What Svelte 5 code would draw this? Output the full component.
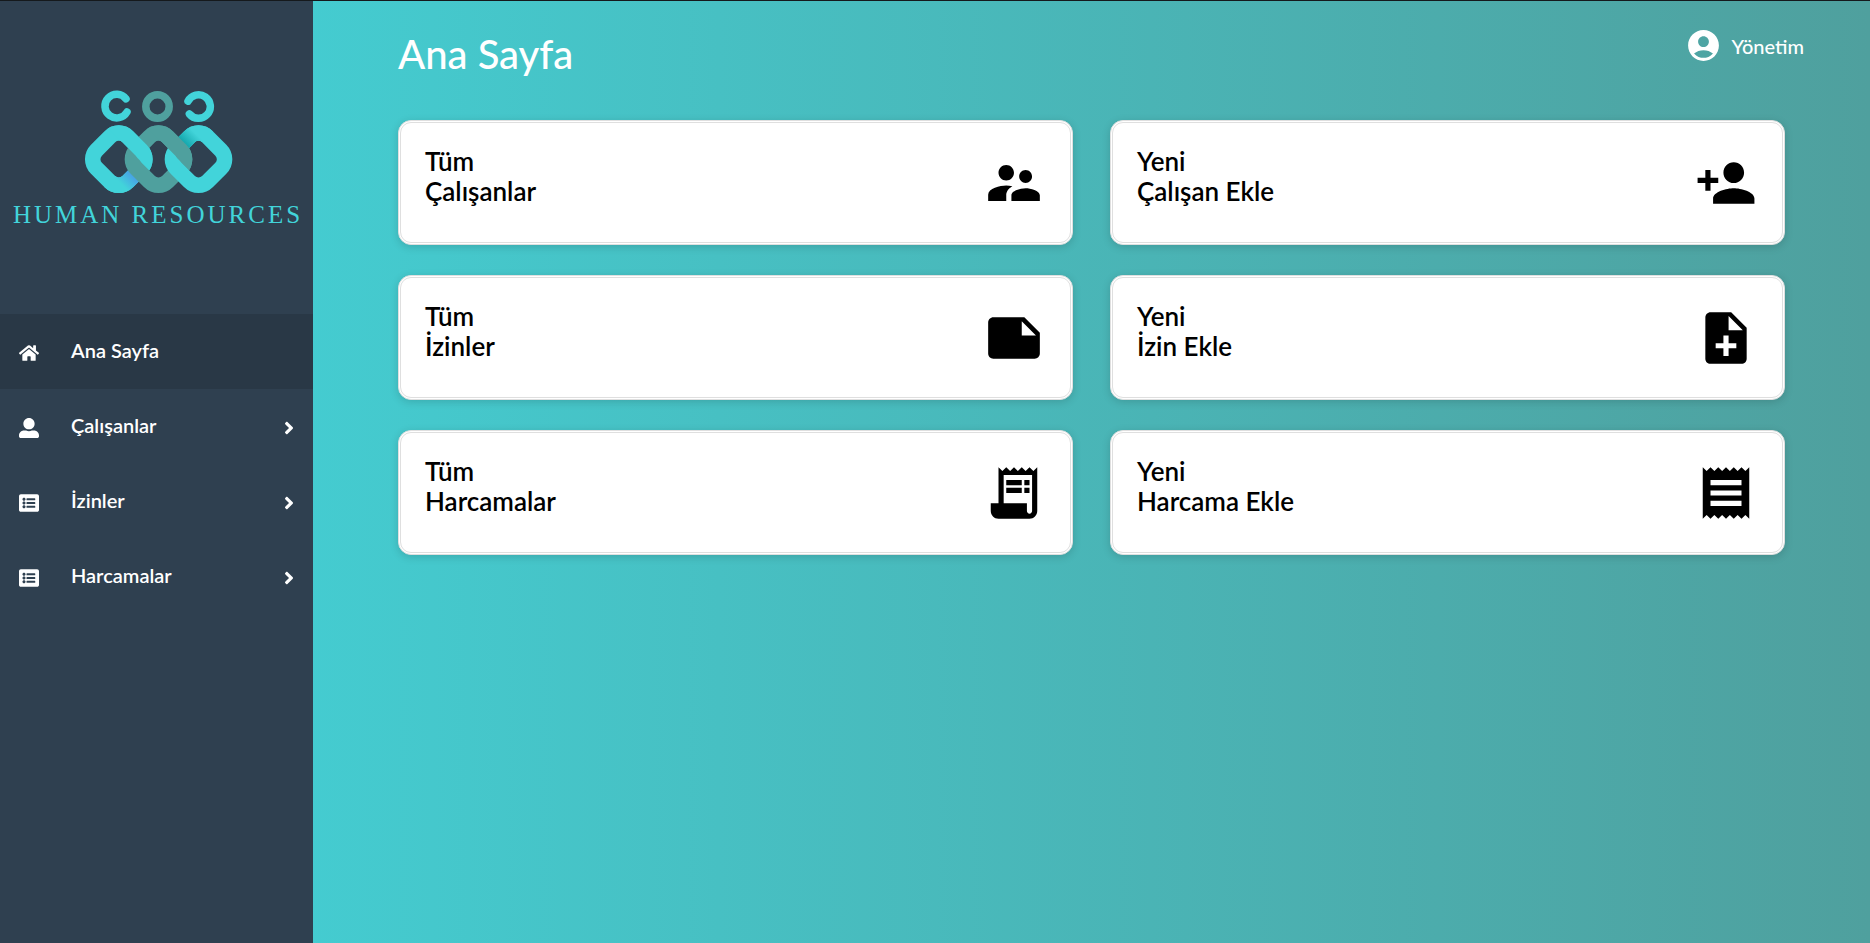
<script>
  const menu = [
    { label: 'Ana Sayfa', icon: 'home', active: true },
    { label: 'Çalışanlar', icon: 'user', expandable: true },
    { label: 'İzinler', icon: 'list', expandable: true },
    { label: 'Harcamalar', icon: 'list', expandable: true }
  ];

  const glyphs = {
    home: { box: '0 0 576 512', d: 'M280.37 148.26L96 300.11V464a16 16 0 0 0 16 16l112.06-.29a16 16 0 0 0 15.92-16V368a16 16 0 0 1 16-16h64a16 16 0 0 1 16 16v95.64a16 16 0 0 0 16 16.05L464 480a16 16 0 0 0 16-16V300L295.67 148.26a12.19 12.19 0 0 0-15.3 0zM571.6 251.47L488 182.56V44.05a12 12 0 0 0-12-12h-56a12 12 0 0 0-12 12v72.61L318.47 43a48 48 0 0 0-61 0L4.34 251.47a12 12 0 0 0-1.6 16.9l25.5 31A12 12 0 0 0 45.15 301l235.22-193.74a12.19 12.19 0 0 1 15.3 0L530.9 301a12 12 0 0 0 16.9-1.6l25.5-31a12 12 0 0 0-1.7-16.93z' },
    user: { box: '0 0 512 512', d: 'M256 288c79.5 0 144-64.5 144-144S335.5 0 256 0 112 64.5 112 144s64.5 144 144 144zm128 32h-55.1c-22.2 10.2-46.9 16-72.9 16s-50.6-5.8-72.9-16H128C57.3 320 0 377.3 0 448v16c0 26.5 21.5 48 48 48h416c26.5 0 48-21.5 48-48v-16c0-70.7-57.3-128-128-128z' },
    list: { box: '0 0 512 512', d: 'M464 480H48c-26.51 0-48-21.49-48-48V80c0-26.51 21.49-48 48-48h416c26.51 0 48 21.49 48 48v352c0 26.51-21.49 48-48 48zM128 120c-22.091 0-40 17.909-40 40s17.909 40 40 40 40-17.909 40-40-17.909-40-40-40zm0 96c-22.091 0-40 17.909-40 40s17.909 40 40 40 40-17.909 40-40-17.909-40-40-40zm0 96c-22.091 0-40 17.909-40 40s17.909 40 40 40 40-17.909 40-40-17.909-40-40-40zm288-136v-32c0-6.627-5.373-12-12-12H204c-6.627 0-12 5.373-12 12v32c0 6.627 5.373 12 12 12h200c6.627 0 12-5.373 12-12zm0 96v-32c0-6.627-5.373-12-12-12H204c-6.627 0-12 5.373-12 12v32c0 6.627 5.373 12 12 12h200c6.627 0 12-5.373 12-12zm0 96v-32c0-6.627-5.373-12-12-12H204c-6.627 0-12 5.373-12 12v32c0 6.627 5.373 12 12 12h200c6.627 0 12-5.373 12-12z' }
  };

  const cards = [
    { top: 'Tüm', bottom: 'Çalışanlar', d: 'M16.5 12c1.38 0 2.49-1.12 2.49-2.5S17.88 7 16.5 7C15.12 7 14 8.12 14 9.5s1.12 2.5 2.5 2.5zM9 11c1.66 0 2.99-1.34 2.99-3S10.66 5 9 5C7.34 5 6 6.34 6 8s1.34 3 3 3zm7.5 3c-1.83 0-5.5.92-5.5 2.75V19h11v-2.25c0-1.83-3.67-2.75-5.5-2.75zM9 13c-2.33 0-7 1.17-7 3.5V19h7v-2.25c0-.85.33-2.34 2.37-3.47C10.5 13.1 9.66 13 9 13z' },
    { top: 'Yeni', bottom: 'Çalışan Ekle', d: 'M15 12c2.21 0 4-1.79 4-4s-1.79-4-4-4-4 1.79-4 4 1.79 4 4 4zm-9-2V7H4v3H1v2h3v3h2v-3h3v-2H6zm9 4c-2.67 0-8 1.34-8 4v2h16v-2c0-2.66-5.33-4-8-4z' },
    { top: 'Tüm', bottom: 'İzinler', d: 'M22 10l-6-6H4c-1.1 0-2 .9-2 2v12.01c0 1.1.9 1.99 2 1.99l16-.01c1.1 0 2-.89 2-1.99v-8zm-7-4.5l5.5 5.5H15V5.5z' },
    { top: 'Yeni', bottom: 'İzin Ekle', d: 'M14 2H6c-1.1 0-1.99.9-1.99 2L4 20c0 1.1.89 2 1.99 2H18c1.1 0 2-.9 2-2V8l-6-6zm2 14h-3v3h-2v-3H8v-2h3v-3h2v3h3v2zm-3-7V3.5L18.5 9H13z' },
    { top: 'Tüm', bottom: 'Harcamalar', d: 'M19.5 3.5L18 2l-1.5 1.5L15 2l-1.5 1.5L12 2l-1.5 1.5L9 2 7.5 3.5 6 2v14H3v3c0 1.66 1.34 3 3 3h12c1.66 0 3-1.34 3-3V2l-1.5 1.5zM19 19c0 .55-.45 1-1 1s-1-.45-1-1v-3H8V5h11v14zM9 7h6v2H9zM16 7h2v2h-2zM9 10h6v2H9zM16 10h2v2h-2z' },
    { top: 'Yeni', bottom: 'Harcama Ekle', d: 'M18 17H6v-2h12v2zm0-4H6v-2h12v2zm0-4H6V7h12v2zM3 22l1.5-1.5L6 22l1.5-1.5L9 22l1.5-1.5L12 22l1.5-1.5L15 22l1.5-1.5L18 22l1.5-1.5L21 22V2l-1.5 1.5L18 2l-1.5 1.5L15 2l-1.5 1.5L12 2l-1.5 1.5L9 2 7.5 3.5 6 2 4.5 3.5 3 2v20z' }
  ];
</script>

<div class="shell">
  <aside class="sidebar">
    <div class="brand">
      <svg class="mark" viewBox="80 90 154 104" aria-hidden="true">
        <defs>
          <linearGradient id="fadeBlue" gradientUnits="userSpaceOnUse" x1="141" y1="160" x2="141" y2="175">
            <stop offset="0" stop-color="#489fe6" />
            <stop offset="1" stop-color="#42d4da" />
          </linearGradient>
          <linearGradient id="fadeTeal" gradientUnits="userSpaceOnUse" x1="176" y1="157" x2="176" y2="143">
            <stop offset="0" stop-color="#17aab0" />
            <stop offset="1" stop-color="#42d4da" />
          </linearGradient>
          <clipPath id="overLeft"><path d="M90 110.500L172 192.500V110.500z" /></clipPath>
          <clipPath id="overMiddle"><path d="M129.500 110.500L211.500 192.500V110.500z" /></clipPath>
        </defs>
        <g fill="none" stroke-width="7.500" stroke-linecap="round">
          <path stroke="#42d4da" d="M126 98.800A11.800 11.800 0 1 0 127 112" />
          <circle stroke="#4fa09e" cx="157.500" cy="106.500" r="11.700" />
          <path stroke="#42d4da" d="M188 101.200A11.800 11.800 0 1 1 189.400 114" />
        </g>
        <g fill="none" stroke-width="15.500">
          <g transform="rotate(45 118.800 159.200)">
            <rect stroke="#42d4da" x="96.600" y="137" width="44.400" height="44.400" rx="12.800" />
            <path stroke="url(#fadeBlue)" d="M141 157V168.600A12.800 12.800 0 0 1 128.200 181.400" />
          </g>
          <rect stroke="#4fa09e" x="136.300" y="137" width="44.400" height="44.400" rx="12.800" transform="rotate(45 158.500 159.200)" />
          <g clip-path="url(#overLeft)">
            <rect stroke="#42d4da" x="96.600" y="137" width="44.400" height="44.400" rx="12.800" transform="rotate(45 118.800 159.200)" />
          </g>
          <g transform="rotate(45 198.500 159.200)">
            <rect stroke="#42d4da" x="176.300" y="137" width="44.400" height="44.400" rx="12.800" />
            <path stroke="url(#fadeTeal)" d="M176.300 161V149.800A12.800 12.800 0 0 1 189.100 137" />
          </g>
          <g clip-path="url(#overMiddle)">
            <rect stroke="#4fa09e" x="136.300" y="137" width="44.400" height="44.400" rx="12.800" transform="rotate(45 158.500 159.200)" />
          </g>
        </g>
      </svg>
      <span class="wordmark">HUMAN RESOURCES</span>
    </div>

    <nav>
      {#each menu as item}
        <a class="item" class:active={item.active} href="#top">
          <svg class="glyph" viewBox={glyphs[item.icon].box} aria-hidden="true"><path d={glyphs[item.icon].d} /></svg>
          <span class="label">{item.label}</span>
          {#if item.expandable}
            <svg class="arrow" viewBox="0 0 256 512" aria-hidden="true">
              <path d="M224.300 273l-136 136c-9.400 9.400-24.600 9.400-33.900 0l-22.600-22.600c-9.400-9.400-9.400-24.600 0-33.900l96.400-96.400-96.400-96.400c-9.400-9.400-9.400-24.600 0-33.900L54.300 103c9.400-9.400 24.600-9.400 33.900 0l136 136c9.500 9.400 9.500 24.600.1 34z" />
            </svg>
          {/if}
        </a>
      {/each}
    </nav>
  </aside>

  <main>
    <header>
      <h1>Ana Sayfa</h1>
      <button class="account" type="button">
        <svg viewBox="0 0 24 24" aria-hidden="true"><path d="M12 2C6.480 2 2 6.480 2 12s4.480 10 10 10 10-4.480 10-10S17.520 2 12 2zm0 4c1.930 0 3.500 1.570 3.500 3.500S13.930 13 12 13s-3.500-1.570-3.500-3.500S10.070 6 12 6zm0 14c-2.030 0-4.430-.820-6.140-2.880C7.550 15.800 9.680 15 12 15s4.450.800 6.140 2.120C16.430 19.180 14.030 20 12 20z" /></svg>
        <span>Yönetim</span>
      </button>
    </header>

    <section class="cards">
      {#each cards as card}
        <a class="card" href="#top">
          <span class="title">{card.top}<br />{card.bottom}</span>
          <svg viewBox="0 0 24 24" aria-hidden="true"><path d={card.d} /></svg>
        </a>
      {/each}
    </section>
  </main>
</div>

<style>
  :global(body) {
    margin: 0;
    font-family: Lato, 'Trebuchet MS', sans-serif;
    background: #4fa09e;
  }

  .shell {
    box-sizing: border-box;
    display: flex;
    min-height: 100vh;
    border-top: 1px solid #15191c;
    background: linear-gradient(to right, #42d4da, #4fa09e);
  }

  .sidebar {
    flex: none;
    width: 313px;
    background: #2f4050;
  }

  .brand {
    box-sizing: border-box;
    height: 313px;
    padding-top: 89px;
    display: flex;
    flex-direction: column;
    align-items: center;
  }

  .mark {
    width: 154px;
    height: 104px;
  }

  .wordmark {
    margin-top: 6px;
    padding-left: 3px;
    font: 25px/30px 'Liberation Serif', serif;
    letter-spacing: 3px;
    white-space: nowrap;
    color: #42d4da;
  }

  .item {
    box-sizing: border-box;
    display: flex;
    align-items: center;
    height: 75px;
    padding: 0 19px;
    color: #fff;
    font-size: 20px;
    font-weight: 600;
    line-height: 24px;
    text-decoration: none;
  }

  .item.active {
    background: #293846;
  }

  .item svg {
    fill: #fff;
    margin-top: 3px;
  }

  .glyph {
    width: 20px;
    height: 20px;
    margin-right: 32px;
  }

  .label {
    flex: 1;
    padding-bottom: 3px;
  }

  .arrow {
    width: 10px;
    height: 20px;
  }

  main {
    flex: 1;
    min-width: 0;
    padding: 26px 85px;
  }

  header {
    display: flex;
    justify-content: space-between;
    align-items: flex-start;
    margin-bottom: 38px;
    color: #fff;
  }

  h1 {
    margin: 0;
    font-size: 40px;
    font-weight: 500;
    line-height: 55px;
  }

  .account {
    display: flex;
    align-items: center;
    gap: 9px;
    margin-right: -19px;
    padding: 0;
    border: 0;
    background: none;
    color: #fff;
    font: inherit;
    font-size: 20px;
    font-weight: 500;
    line-height: 24px;
    cursor: pointer;
  }

  .account svg {
    width: 37px;
    height: 37px;
    fill: #fff;
  }

  .cards {
    display: grid;
    grid-template-columns: 1fr 1fr;
    gap: 30px 37px;
  }

  .card {
    box-sizing: border-box;
    display: flex;
    justify-content: space-between;
    align-items: center;
    height: 125px;
    padding: 0 25px 0 24px;
    border: 3px double #dfdfdf;
    border-radius: 13px;
    background: #fff;
    box-shadow: 0 2px 8px rgba(0, 0, 0, 0.15);
    color: #000;
    text-decoration: none;
  }

  .title {
    margin-bottom: 14px;
    font-size: 26px;
    font-weight: 600;
    line-height: 30px;
  }

  .card svg {
    flex: none;
    width: 62px;
    height: 62px;
  }
</style>
